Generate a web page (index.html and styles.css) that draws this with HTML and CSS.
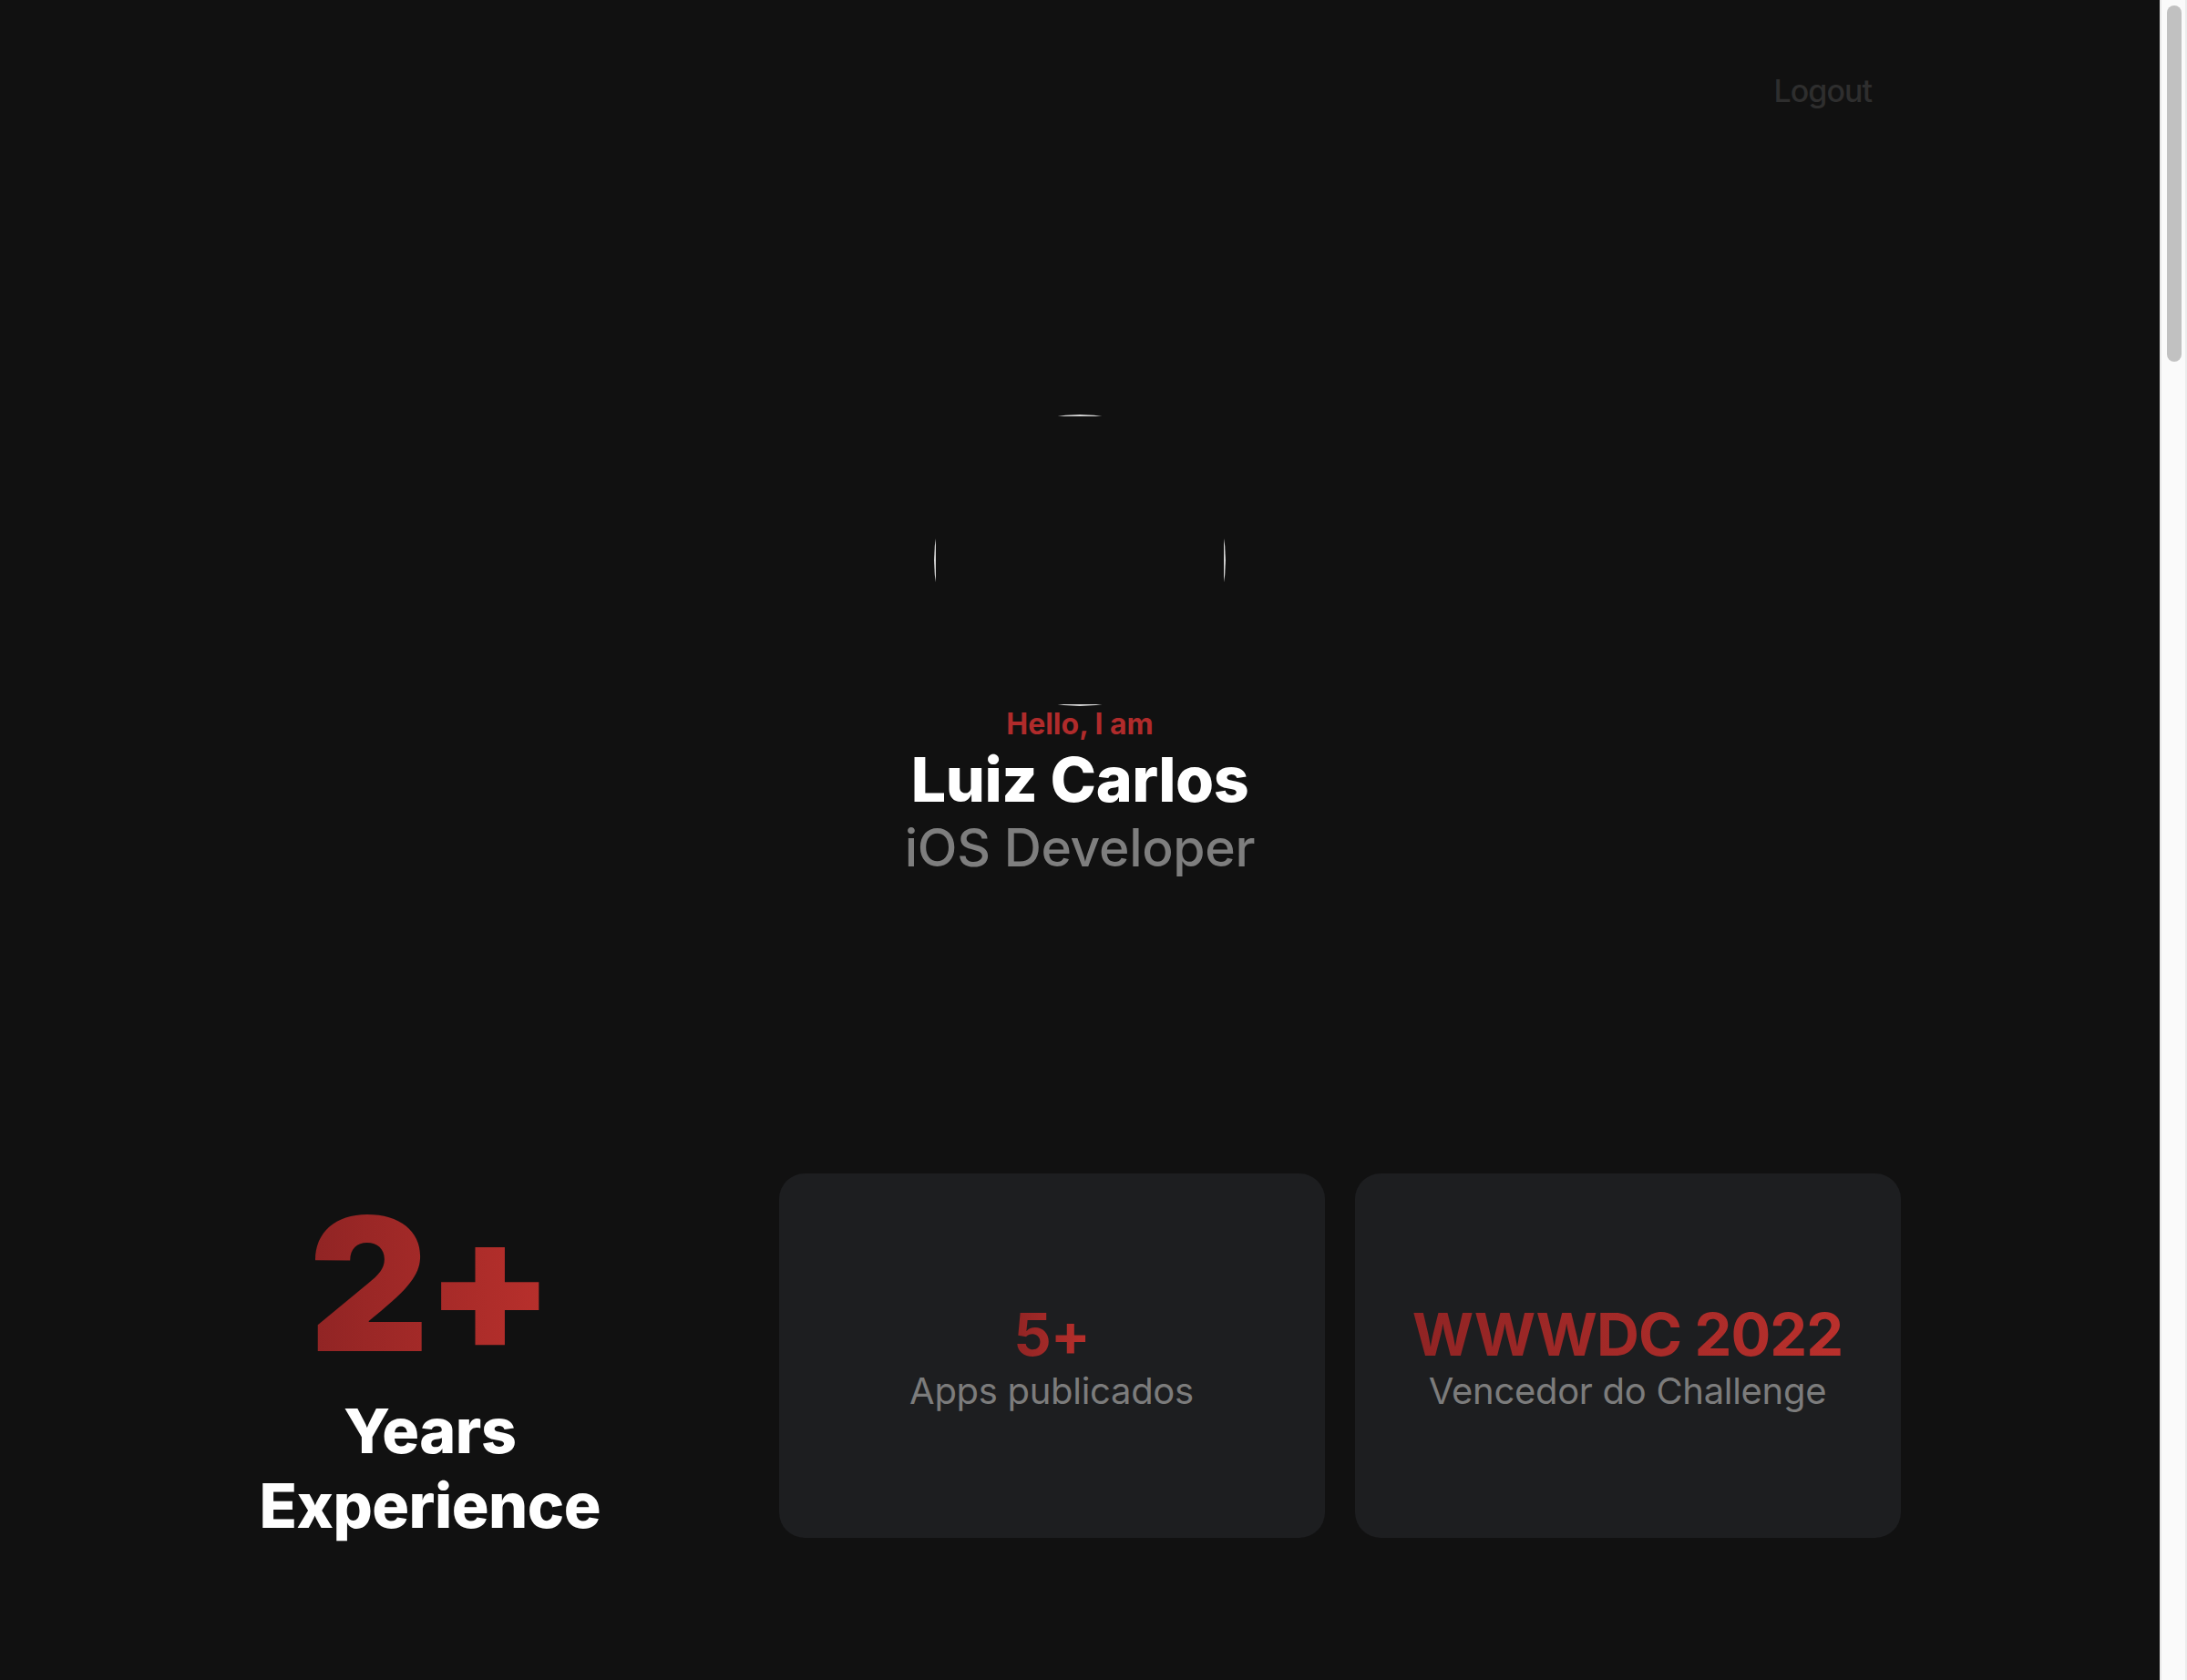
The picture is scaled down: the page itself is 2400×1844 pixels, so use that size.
FILE: index.html
```html
<!DOCTYPE html>
<html lang="en">
<head>
<meta charset="utf-8">
<title>Luiz Carlos - iOS Developer</title>
<link rel="stylesheet" href="styles.css">
</head>
<body>
<div class="page">
  <main class="main">
    <header class="header">
      <a class="logout">Logout</a>
    </header>
    <section class="hero">
      <div class="avatar"><div class="avatar-inner"></div></div>
      <p class="hello">Hello, I am</p>
      <h1 class="name">Luiz Carlos</h1>
      <p class="role">iOS Developer</p>
    </section>
    <section class="stats">
      <div class="experience">
        <div class="big"><span class="grad">2+</span></div>
        <div class="exp-label">Years<br>Experience</div>
      </div>
      <div class="cards">
        <div class="card">
          <div class="card-title"><span class="grad">5+</span></div>
          <div class="card-sub">Apps publicados</div>
        </div>
        <div class="card">
          <div class="card-title"><span class="grad">WWWDC 2022</span></div>
          <div class="card-sub">Vencedor do Challenge</div>
        </div>
      </div>
    </section>
  </main>
  <div class="scrollbar"><div class="thumb"></div></div>
</div>
</body>
</html>
```
FILE: styles.css
```css
html, body {
  margin: 0;
  padding: 0;
  height: 100%;
  overflow: hidden;
}
body {
  background: #111111;
  font-family: Inter, "Noto Sans", "Liberation Sans", sans-serif;
  color: #ffffff;
}
.page {
  display: flex;
  height: 100vh;
}
.main {
  flex: 1;
  min-width: 0;
  overflow: hidden;
}
.scrollbar {
  box-sizing: border-box;
  width: 30px;
  flex: none;
  background: #fafafa;
  border-left: 2px solid #e8e8e8;
  border-right: 2px solid #ececec;
  padding: 6px 4px 0 6px;
}
.thumb {
  height: 391px;
  border-radius: 8px;
  background: #c1c1c1;
}
.header {
  max-width: 1800px;
  margin: 0 auto;
  display: flex;
  justify-content: flex-end;
  padding-top: 63px;
}
.logout {
  padding: 16px 31px;
  font-size: 34px;
  font-weight: 500;
  letter-spacing: -1px;
  color: #2e2e2e;
  line-height: normal;
}
.hero {
  display: flex;
  flex-direction: column;
  align-items: center;
  margin-top: 319px;
}
.avatar {
  width: 320px;
  height: 320px;
  border-radius: 50%;
  background: #d4d4d4;
  display: flex;
  align-items: center;
  justify-content: center;
}
.avatar-inner {
  flex: none;
  width: 316px;
  height: 316px;
  background: #111111;
}
.hello {
  margin: 0;
  font-size: 32px;
  font-weight: 700;
  color: #b02b2b;
  line-height: normal;
}
.name {
  margin: 0;
  font-size: 68px;
  font-weight: 800;
  color: #ffffff;
  line-height: normal;
  letter-spacing: -0.5px;
}
.role {
  margin: 0;
  font-size: 57px;
  font-weight: 450;
  color: #7e7e7e;
  line-height: normal;
  letter-spacing: -0.3px;
}
.stats {
  max-width: 1801px;
  margin: 318px auto 0;
  display: flex;
  justify-content: space-between;
  align-items: center;
}
.experience {
  display: flex;
  flex-direction: column;
  align-items: center;
  text-align: center;
  margin-top: 24px;
}
.big {
  font-size: 204px;
  font-weight: 900;
  line-height: 1;
  letter-spacing: -4px;
}
.grad {
  background: linear-gradient(90deg, #902424, #b9302c);
  -webkit-background-clip: text;
  background-clip: text;
  color: transparent;
}
.exp-label {
  margin-top: 18px;
  font-size: 68px;
  font-weight: 800;
  line-height: 82px;
  letter-spacing: -0.5px;
}
.cards {
  display: flex;
  gap: 33px;
}
.card {
  box-sizing: border-box;
  width: 599px;
  height: 400px;
  padding-top: 6px;
  border-radius: 28px;
  background: #1d1e20;
  display: flex;
  flex-direction: column;
  align-items: center;
  justify-content: center;
}
.card-title {
  font-size: 65px;
  font-weight: 700;
  line-height: 1;
  letter-spacing: -1px;
}
.card-sub {
  margin-top: 6px;
  font-size: 40px;
  font-weight: 400;
  line-height: 48px;
  letter-spacing: -0.3px;
  color: #7c7c7c;
}
```
